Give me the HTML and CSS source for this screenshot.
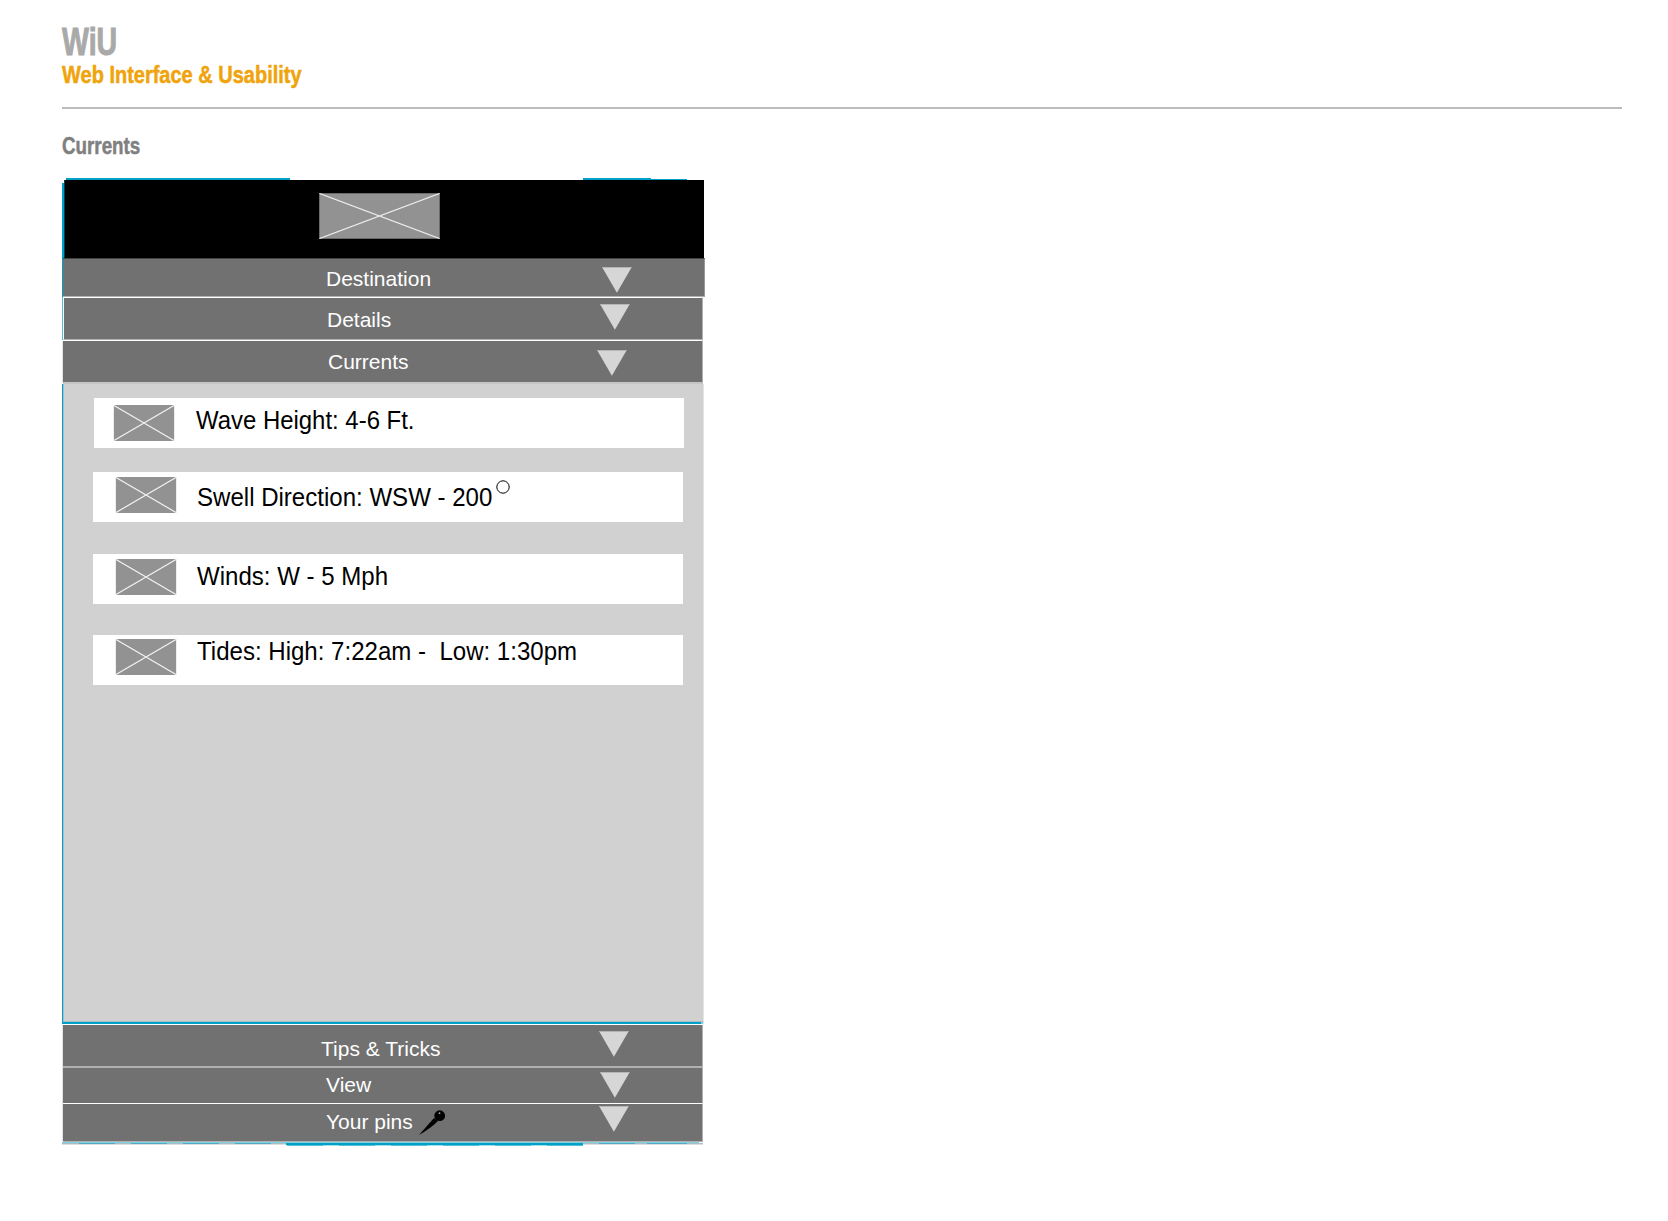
FILE: index.html
```html
<!DOCTYPE html>
<html lang="en">
<head>
<meta charset="utf-8">
<title>WiU - Currents</title>
<link rel="stylesheet" href="styles.css">
</head>
<body>
<svg class="defs" aria-hidden="true">
  <symbol id="arrow" viewBox="0 0 30 26"><path d="M.3 .4H29.5L14.9 25.7Z" fill="#d6d6d6"/><path d="M0 .5H29.7" stroke="#b5b5b5"/></symbol>
  <symbol id="thumb" viewBox="0 0 62 36"><path d="M.5 0H61.5V36H.5Z" fill="#ddd"/><path d="M1 0H61V36H1Z" fill="#929292"/><path d="M1 .5L61 35.5M61 .5L1 35.5" stroke="#f2f2f2" stroke-width="1.2"/></symbol>
</svg>
<header class="head">
  <h1 class="brand">WiU</h1>
  <p class="tagline">Web Interface &amp; Usability</p>
</header>
<main>
  <h2 class="title">Currents</h2>
  <section class="phone">
    <div class="banner">
      <svg class="logo" viewBox="0 0 121 46"><path d="M0 0H121V46H0Z" fill="#6b6b6b"/><path d="M1 1H120V45H1Z" fill="#929292"/><path d="M.5 .5L120.5 45.5M120.5 .5L.5 45.5" stroke="#f0f0f0" stroke-width="1.2"/></svg>
    </div>
    <div class="bar destination"><span class="label">Destination</span><svg class="arrow"><use href="#arrow"/></svg></div>
    <div class="bar details"><span class="label">Details</span><svg class="arrow"><use href="#arrow"/></svg></div>
    <div class="bar currents"><span class="label">Currents</span><svg class="arrow"><use href="#arrow"/></svg></div>
    <div class="content">
      <div class="card wave"><svg class="thumb"><use href="#thumb"/></svg><span class="reading">Wave Height: 4-6 Ft.</span></div>
      <div class="card swell"><svg class="thumb"><use href="#thumb"/></svg><span class="reading">Swell Direction: WSW - 200</span><svg class="degree" viewBox="0 0 14 14"><circle cx="7" cy="7" r="6.2" fill="none" stroke="#000"/></svg></div>
      <div class="card winds"><svg class="thumb"><use href="#thumb"/></svg><span class="reading">Winds: W - 5 Mph</span></div>
      <div class="card tides"><svg class="thumb"><use href="#thumb"/></svg><span class="reading">Tides: High: 7:22am -&nbsp; Low: 1:30pm</span></div>
    </div>
    <div class="bar tips"><span class="label">Tips &amp; Tricks</span><svg class="arrow"><use href="#arrow"/></svg></div>
    <div class="bar view"><span class="label">View</span><svg class="arrow"><use href="#arrow"/></svg></div>
    <div class="bar pins"><span class="label">Your pins</span><svg class="pin" viewBox="0 0 28 26"><path d="M1 25L16 8L20 11Q13 18 1 25Z"/><circle cx="21.7" cy="5.7" r="5.4"/><circle cx="21.5" cy="3.2" r=".9" fill="#aaa"/></svg><svg class="arrow"><use href="#arrow"/></svg></div>
    <svg class="frame" viewBox="0 0 643 968" shape-rendering="crispEdges">
      <g fill="#00a0c8">
        <path d="M4 0H228V2H4ZM521 0H589V2H521ZM589 1H625V2H589Z"/>
        <path d="M0 5H2V80H0ZM0 80H1V119H0ZM0 206H1V846H0ZM0 844H639V846H0Z"/>
        <path d="M224 965H521V967H224Z"/>
      </g>
      <path d="M2 2H3V80H2Z" fill="#004557"/>
      <path d="M0 119H1V162H0Z" fill="#4fc0da"/>
      <path d="M0 163H1V205H0ZM0 847H1V963H0Z" fill="#dce4e6"/>
      <path d="M1 206H2V843H1ZM1 843H641V844H1Z" fill="#a8bec3"/>
      <path d="M639 844H641V846H639Z" fill="#80cfe0"/>
      <path d="M0 964H637V965H0Z" fill="#80d0e2"/>
      <path d="M0 965H224V966H0ZM521 965H641V966H521Z" fill="#a8bec3"/>
      <path d="M0 966H224V967H0ZM521 966H641V967H521Z" fill="#dedede"/>
      <path d="M17 965H53V966H17ZM69 965H105V966H69ZM121 965H157V966H121ZM173 965H209V966H173ZM537 965H573V966H537ZM585 965H625V966H585Z" fill="#4fabc5"/>
      <path d="M225 967H521V968H225Z" fill="#a5dfea"/>
      <path d="M225 967H261V968H225ZM277 967H313V968H277ZM329 967H365V968H329ZM381 967H417V968H381ZM433 967H469V968H433ZM485 967H521V968H485Z" fill="#4fc0da"/>
    </svg>
  </section>
</main>
</body>
</html>
```
FILE: styles.css
```css
* { box-sizing: border-box; margin: 0; padding: 0; }
body { background: #fff; font-family: "Liberation Sans", Arial, sans-serif; padding: 0 46px 0 62px; }
svg { display: block; flex: none; }
.defs { position: absolute; width: 0; height: 0; }

.head { height: 109px; padding-top: 20px; border-bottom: 2px solid #bcbcbc; }
.brand, .tagline, .title { font-weight: bold; white-space: nowrap; transform-origin: left; width: max-content; -webkit-text-stroke: .5px currentColor; }
.brand { font-size: 38px; line-height: 44px; color: #a9a9a9; transform: scaleX(.75); -webkit-text-stroke-width: 1px; }
.tagline { font-size: 24.5px; line-height: 28px; margin-top: -3px; color: #f0a30a; transform: scaleX(.816); }
.title { font-size: 23px; line-height: 28px; margin-top: 23px; color: #808080; transform: scaleX(.816); }

.phone { position: relative; width: 643px; height: 968px; margin-top: 18px; padding-top: 2px; }
.frame { position: absolute; left: 0; top: 0; width: 643px; height: 968px; pointer-events: none; }

.banner { width: 639px; height: 78px; margin-left: 3px; padding: 13px 0 0 254px; background: #000; }
.logo { width: 121px; height: 46px; }

.bar { display: flex; align-items: flex-start; width: 640px; margin-left: 1px; background: #717171; color: #fff; }
.label { width: 271px; margin-left: 263px; font-size: 21px; line-height: 24px; white-space: nowrap; }
.arrow { width: 30px; height: 26px; }

.destination { width: 642px; height: 39px; border-top: 1px solid #444; border-bottom: 1px solid #b0b0b0; border-right: 1px solid #999; }
.destination .label { margin-top: 8px; width: 276px; }
.destination .arrow { margin-top: 7.5px; }
.details { width: 640px; height: 43px; margin-left: 1px; border-top: 1px solid #fff; border-left: 1px solid #fff; border-bottom: 1px solid #b0b0b0; border-right: 1px solid #b0b0b0; }
.details .label { margin-top: 10px; width: 273px; }
.details .arrow { margin-top: 6px; }
.currents { height: 44px; border-top: 1px solid #fff; border-bottom: 2px solid #c4c4c4; border-right: 1px solid #b0b0b0; }
.currents .label { margin: 9px 0 0 265px; width: 269px; }
.currents .arrow { margin-top: 9px; }

.content { width: 641px; height: 641px; margin-left: 1px; padding: 14px 0 0 30px; background: #d1d1d1; border-bottom: 1px solid #fff; border-right: 1px solid #e4e4e4; }
.card { display: flex; align-items: flex-start; width: 590px; height: 50px; background: #fff; padding-left: 22px; }
.thumb { width: 62px; height: 36px; }
.reading { margin-left: 20px; font-size: 25px; line-height: 28px; white-space: nowrap; transform: scaleX(.962); transform-origin: left; }
.wave { margin-left: 1px; padding-left: 19px; }
.wave .thumb { margin-top: 7px; }
.wave .reading { margin: 8px 0 0 21px; transform: scaleX(.957); }
.swell { margin-top: 24px; }
.swell .thumb { margin-top: 5px; }
.swell .reading { margin-top: 11px; width: 299px; }
.degree { width: 14px; height: 14px; margin-top: 8px; }
.winds { margin-top: 32px; }
.winds .thumb { margin-top: 5px; }
.winds .reading { margin-top: 8px; }
.tides { margin-top: 31px; }
.tides .thumb { margin-top: 4px; }
.tides .reading { margin-top: 2px; }

.tips { height: 42px; border-bottom: 1px solid #b0b0b0; border-right: 1px solid #b0b0b0; }
.tips .label { margin: 12px 0 0 258px; width: 278px; }
.tips .arrow { margin-top: 6px; }
.view { height: 36px; border-top: 1px solid #b0b0b0; border-right: 1px solid #b0b0b0; }
.view .label { margin-top: 5px; width: 273.5px; }
.view .arrow { margin-top: 4px; }
.pins { height: 39px; border-top: 1px solid #fff; border-bottom: 1px solid #b0b0b0; border-right: 1px solid #b0b0b0; }
.pins .label { width: 92px; margin-top: 6px; }
.pin { width: 28px; height: 26px; margin-top: 6px; }
.pins .arrow { margin: 2px 0 0 152.5px; }
```
